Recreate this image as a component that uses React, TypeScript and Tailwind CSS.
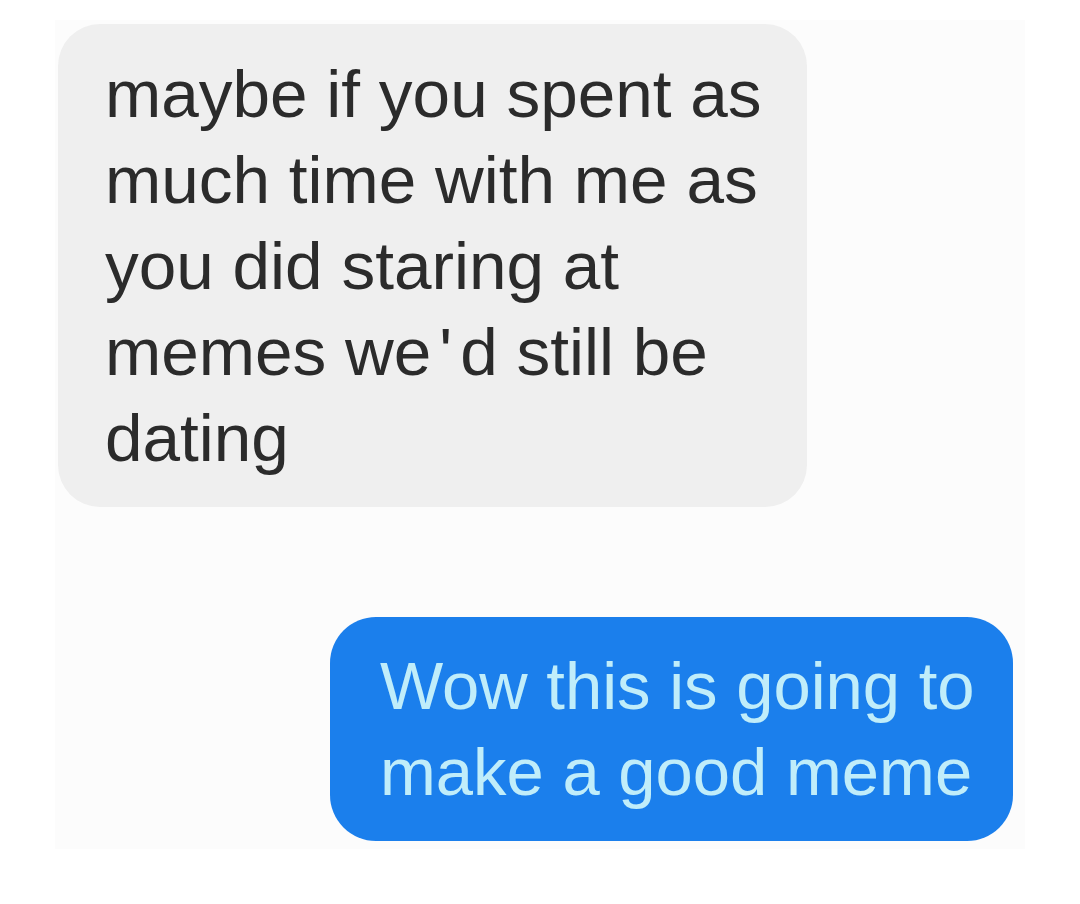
export default function App() {
  const outgoing = ["Wow this is going to", "make a good meme"];

  return (
    <main className="min-h-[904px] w-full bg-white font-['Liberation_Sans',Arial,sans-serif]">
      <div className="ml-[55px] pt-[20px] w-[970px]">
        <div className="flex flex-col bg-[#fcfcfc] pb-[8px]">
          {/* received bubble */}
          <div className="ml-[3px] mt-[4px] w-[749px] rounded-[42px] bg-[#efefef] pl-[47px] pr-6 pt-[27px] pb-[26px] text-[67.5px] leading-[86px] text-[#2b2b2b]">
            <div className="whitespace-nowrap">maybe if you spent as</div>
            <div className="whitespace-nowrap">much time with me as</div>
            <div className="whitespace-nowrap">you did staring at</div>
            <div className="whitespace-nowrap">
              memes we<span className="mx-[8px]">'</span>d still be
            </div>
            <div className="whitespace-nowrap">dating</div>
          </div>

          {/* sent bubble */}
          <div className="self-end mr-[12px] mt-[110px] w-[683px] rounded-[46px] bg-[#1b7fec] pl-[50px] pr-6 pt-[26px] pb-[26px] text-[67px] leading-[86px] text-[#c0edfa]">
            {outgoing.map((line) => (
              <div key={line} className="whitespace-nowrap">
                {line}
              </div>
            ))}
          </div>
        </div>
      </div>
    </main>
  );
}
